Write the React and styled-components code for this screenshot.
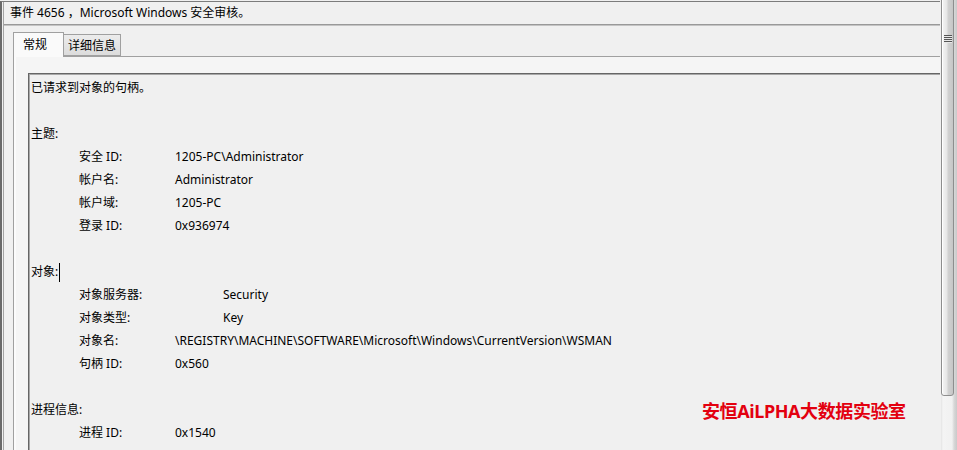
import React from 'react';
import styled, { createGlobalStyle } from 'styled-components';

const GlobalStyle = createGlobalStyle`
  html, body {
    margin: 0;
    padding: 0;
    background: #f0f0f0;
    overflow: hidden;
  }
  body {
    font-family: "Noto Sans", "Noto Sans CJK SC", sans-serif;
    font-size: 12px;
    color: #000;
  }
`;

const subject = [
  { label: '安全 ID:', value: '1205-PC\\Administrator' },
  { label: '帐户名:', value: 'Administrator' },
  { label: '帐户域:', value: '1205-PC' },
  { label: '登录 ID:', value: '0x936974' },
];

const object = [
  { label: '对象服务器:', value: 'Security', wide: true },
  { label: '对象类型:', value: 'Key', wide: true },
  { label: '对象名:', value: '\\REGISTRY\\MACHINE\\SOFTWARE\\Microsoft\\Windows\\CurrentVersion\\WSMAN' },
  { label: '句柄 ID:', value: '0x560' },
];

const process = [
  { label: '进程 ID:', value: '0x1540' },
];

const Fields = ({ items }) => (
  <>
    {items.map((f) => (
      <Field key={f.label}>
        <FieldLabel $wide={f.wide}>{f.label}</FieldLabel>
        <FieldValue>{f.value}</FieldValue>
      </Field>
    ))}
  </>
);

const App = () => {
  return (
    <Window>
      <GlobalStyle />
      <Main>
        <Pane>
          <Title>事件 4656 ，Microsoft Windows 安全审核。</Title>
          <Divider />
          <TabStrip>
            <Tab $active>常规</Tab>
            <Tab>详细信息</Tab>
          </TabStrip>
          <TabPanel>
            <TextBox>
              <Line>已请求到对象的句柄。</Line>
              <Line />
              <Line>主题:</Line>
              <Fields items={subject} />
              <Line />
              <Line>对象:<Caret /></Line>
              <Fields items={object} />
              <Line />
              <Line>进程信息:</Line>
              <Fields items={process} />
            </TextBox>
          </TabPanel>
        </Pane>
      </Main>
      <Scrollbar>
        <Thumb>
          <Grip>
            <span /><span /><span /><span />
          </Grip>
        </Thumb>
        <Track />
      </Scrollbar>
      <Watermark>安恒AiLPHA大数据实验室</Watermark>
    </Window>
  );
};

const Window = styled.div`
position: relative;
display: flex;
width: 957px;
height: 450px;
overflow: hidden;
background: #f0f0f0;
`

const Main = styled.div`
flex: 1;
min-width: 0;
margin-top: 1px;
border-top: 1px solid #7c7c7c;
border-left: 2px solid #6a6a6a;
padding-left: 1px;
overflow: hidden;
`

const Pane = styled.div`
height: 100%;
border-left: 1px solid #a4a4a4;
`

const Title = styled.div`
height: 22px;
line-height: 22px;
padding-left: 6px;
white-space: nowrap;
`

const Divider = styled.div`
height: 0;
border-top: 1px solid #999;
border-bottom: 1px solid #c4c4c4;
`

const TabStrip = styled.div`
display: flex;
align-items: flex-end;
height: 30px;
padding-left: 9px;
`

const Tab = styled.div`
position: relative;
z-index: ${(p) => (p.$active ? 1 : 0)};
box-sizing: border-box;
height: ${(p) => (p.$active ? '25px' : '22px')};
margin-bottom: ${(p) => (p.$active ? '-1px' : '0')};
padding: ${(p) => (p.$active ? '3px 9px 0' : '2px 4px 0')};
min-width: ${(p) => (p.$active ? '51px' : '0')};
border: 1px solid #a0a0a0;
border-bottom: ${(p) => (p.$active ? 'none' : '1px solid #a0a0a0')};
border-left: ${(p) => (p.$active ? '1px solid #a0a0a0' : 'none')};
background: ${(p) => (p.$active ? '#fafafa' : 'linear-gradient(#ececec, #dcdcdc)')};
line-height: 17px;
font-size: 12px;
`

const TabPanel = styled.div`
height: 100%;
margin-left: 9px;
border-top: 1px solid #a0a0a0;
border-left: 1px solid #a0a0a0;
box-shadow: inset 2px 0 0 #fbfbfb;
background: #f5f5f5;
padding: 16px 0 0 14px;
`

const TextBox = styled.div`
height: 100%;
border-top: 1px solid #666;
border-left: 1px solid #666;
box-shadow: inset 1px 1px 0 #a8a8a8;
background: #f0f0f0;
padding: 2px 0 0 2px;
white-space: nowrap;
`

const Line = styled.div`
height: 23px;
line-height: 23px;
`

const Caret = styled.span`
display: inline-block;
width: 1px;
height: 19px;
margin-left: 1px;
background: #000;
vertical-align: middle;
`

const Field = styled.div`
display: flex;
height: 23px;
line-height: 23px;
padding-left: 48px;
`

const FieldLabel = styled.span`
flex: 0 0 ${(p) => (p.$wide ? '144px' : '96px')};
`

const FieldValue = styled.span`
white-space: nowrap;
`

const Scrollbar = styled.div`
flex: 0 0 17px;
display: flex;
flex-direction: column;
background: linear-gradient(to right, #f0f0f0 0, #f0f0f0 1px, #e4e4e4 1px, #f4f4f4 3px, #f1f1f1 12px, #d8d8d8 14px, #c9c9c9 17px);
`

const Thumb = styled.div`
position: relative;
height: 399px;
margin: -3px 3px 0 1px;
box-sizing: border-box;
border: 1px solid #8e8e8e;
border-radius: 0 0 3px 3px;
background: linear-gradient(to right, #f6f6f6, #e6e6e6 45%, #d2d2d2 55%, #c6c6c6);
box-shadow: inset 1px 0 0 #fff;
`

const Grip = styled.div`
position: absolute;
top: 37px;
left: 2px;
display: flex;
flex-direction: column;
gap: 1px;
span {
  display: block;
  width: 8px;
  height: 1px;
  background: #555;
  box-shadow: 0 1px 0 #e8e8e8;
}
`

const Track = styled.div`
flex: 1;
`

const Watermark = styled.div`
position: absolute;
top: 400px;
left: 702px;
color: #e3000f;
font-family: "Noto Sans", "Noto Sans CJK SC", sans-serif;
font-size: 18px;
font-weight: bold;
line-height: 22px;
letter-spacing: -0.4px;
white-space: nowrap;
`

export default App;
